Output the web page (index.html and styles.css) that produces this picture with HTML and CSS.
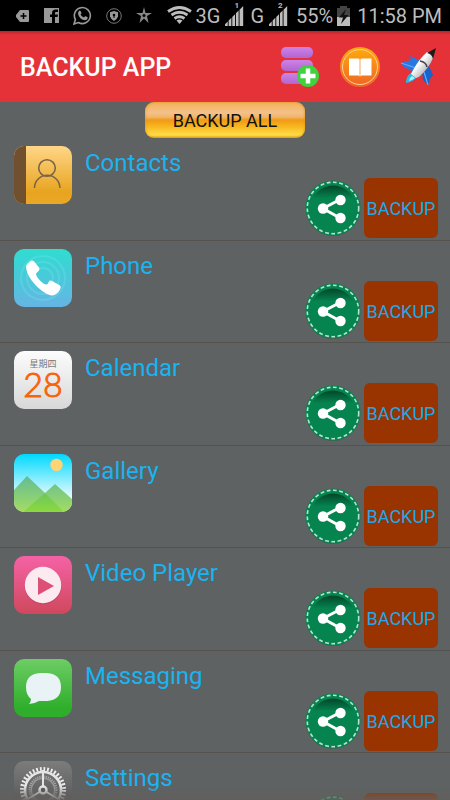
FILE: index.html
```html
<!DOCTYPE html>
<html lang="en">
<head>
<meta charset="utf-8">
<meta name="viewport" content="width=device-width, initial-scale=1">
<title>Backup App</title>
<link rel="stylesheet" href="styles.css">
</head>
<body>
<svg class="defs" aria-hidden="true">
  <defs>
    <linearGradient id="shareShade" x1="0" y1="0" x2="0" y2="1">
      <stop offset="0" stop-color="#00462a"/><stop offset=".1" stop-color="#045c36"/><stop offset=".28" stop-color="#058450"/><stop offset="1" stop-color="#058450"/>
    </linearGradient>
    <symbol id="share" viewBox="0 0 56 56">
      <circle cx="28" cy="29" r="27" fill="#3f5449" opacity=".5"/>
      <circle cx="28" cy="28" r="27.500" fill="#058450"/>
      <circle cx="28" cy="28.500" r="23" fill="url(#shareShade)"/>
      <circle cx="28" cy="28" r="25.700" fill="none" stroke="#b4e5cd" stroke-width="1.600" stroke-dasharray="3.800 2.530"/>
      <path d="M35 19.500 18 28.500l17 9.500" fill="none" stroke="#fff" stroke-width="3"/>
      <circle cx="35.500" cy="20" r="5.200" fill="#fff"/><circle cx="18" cy="28.500" r="5.200" fill="#fff"/><circle cx="35.500" cy="38" r="5.200" fill="#fff"/>
    </symbol>
    <symbol id="signal" viewBox="0 0 22 22">
      <path d="M0 22v-2l3-3v5zM4 22v-6l3-3v9zM8 22V12l3-3v13zM12 22V8l3-3v17zM16 22V4l4-4v22z" fill="#bebebe"/>
    </symbol>
  </defs>
</svg>

<div class="status">
  <div class="status-group">
    <svg width="14" height="12" viewBox="0 0 14 12"><path d="M4 0h8q1 0 1 1v10q0 1-1 1H4L0 7V5z" fill="#999"/><path d="M7.500 3v6M4.500 6h6" stroke="#000" stroke-width="1.500"/></svg>
    <svg width="15" height="15" viewBox="0 0 15 15"><path d="M0 0h15v15h-4V9h2.500l.5-2.500h-3V5q0-1 1-1h2V1.500h-2.500Q8 1.500 8 5v1.500H6V9h2v6H0z" fill="#999"/></svg>
    <svg width="19" height="19" viewBox="0 0 19 19"><path d="M1 18l1.400-4.500a8 8 0 1 1 3 3z" fill="none" stroke="#999" stroke-width="1.600"/><path d="M6 5q1-1 1.500 0l1 2q0 .7-1 1.500 1 2 3.500 3 1-1.500 1.700-1.200l2 1q0 3-3 3Q6 13 5 7.500 5 6 6 5z" fill="#999"/></svg>
    <svg width="16" height="16" viewBox="0 0 16 16"><circle cx="8" cy="8" r="7.300" fill="none" stroke="#777" stroke-width="1"/><path d="M8 3l4 1.300v4Q11.500 11 8 13 4.500 11 4 8.300v-4z" fill="#999"/><circle cx="8" cy="7" r="1.300"/><path d="M8 7v3" stroke="#000"/></svg>
    <svg width="16" height="17" viewBox="0 0 16 17"><path d="M8 0l1.500 6H16l-5 3 1.500 7L8 11.500 3.500 16 5 9 0 6h6.500z" fill="#888"/><circle cx="8" cy="8.500" r="1.500"/></svg>
  </div>
  <div class="status-group status-right">
    <svg width="25" height="19" viewBox="0 0 25 19"><g fill="none" stroke="#bdbdbd" stroke-width="2.800"><path d="M1 5.500Q12.500-2.500 24 5.500M4.500 9Q12.500 3.500 20.500 9M7.500 12.500Q12.500 9 17.500 12.500"/></g><path d="M9.500 14.500q3-2 6 0l-3 3.500z" fill="#bdbdbd"/></svg>
    <span>3G</span>
    <span class="sim"><svg width="22" height="20"><use href="#signal"/></svg><small>1</small></span>
    <span>G</span>
    <span class="sim"><svg width="22" height="20"><use href="#signal"/></svg><small>2</small></span>
    <span class="percent">55%</span>
    <svg width="13" height="20" viewBox="0 0 13 20"><path d="M3 0h7v2h3v18H0V2h3z" fill="#444"/><path d="M0 11h13v9H0z" fill="#bdbdbd"/><path d="M9 3 2 11.500h4L4 18l7.500-9H7z" fill="#111"/></svg>
    <time class="time">11:58 PM</time>
  </div>
</div>

<header class="bar">
  <h1>BACKUP APP</h1>
  <nav class="actions">
    <button type="button" aria-label="Add storage">
      <svg width="40" height="42" viewBox="0 0 40 42">
        <defs><linearGradient id="disk" x1="0" y1="0" x2="0" y2="1"><stop stop-color="#ce83e6"/><stop offset="1" stop-color="#b165d0"/></linearGradient></defs>
        <g fill="url(#disk)"><rect x="1" y="1" width="32" height="11" rx="5"/><rect x="1" y="14" width="32" height="11" rx="5"/><rect x="1" y="27" width="32" height="11" rx="5"/></g>
        <circle cx="28" cy="30" r="11" fill="#3ed23c"/><path d="M28 22.500v15M20.500 30h15" stroke="#fff" stroke-width="4.500"/>
      </svg>
    </button>
    <button type="button" aria-label="Guide">
      <svg width="40" height="42" viewBox="0 0 40 42">
        <defs><linearGradient id="book" x1="0" y1="0" x2="0" y2="1"><stop stop-color="#ffab0b"/><stop offset="1" stop-color="#f06326"/></linearGradient></defs>
        <circle cx="20" cy="21" r="20" fill="url(#book)"/><circle cx="20" cy="21" r="17.500" fill="none" stroke="#ffcf9c" stroke-width="1"/>
        <path d="M9 12.500h9.500q1.500 0 1.500 1.500 0-1.500 1.500-1.500H31.500v17H22q-1 0-2 1-1-1-2-1H9z" fill="#fff"/><path d="M20 13v17" stroke="#f6a75a" stroke-width="1"/>
      </svg>
    </button>
    <button type="button" aria-label="Launch">
      <svg width="40" height="42" viewBox="0 0 40 42">
        <defs><linearGradient id="hull" x1="0" y1="0" x2="1" y2="1"><stop stop-color="#8b8b8b"/><stop offset=".4" stop-color="#fff"/><stop offset="1" stop-color="#777"/></linearGradient></defs>
        <path d="M11 27q-5 3-5 10 7-1 12-7z" fill="#23bde8"/><path d="M12 30q-3 2-3 5 4-1 6-3z" fill="#9ff7ff"/>
        <path d="M21 15 10 10l1 4-10 3 3 4 10 5z" fill="#2878e3"/><path d="M22 25l1 9 5 5 2-6 3-4-4-9z" fill="#1763cb"/><path d="M1 17l15 5M28 39l-4-13" stroke="#64abf8" stroke-width="1.200"/>
        <path d="M12 26Q18 14 27 6q6 1 6 6-4 10-14 19l-3 1-5-4z" fill="url(#hull)"/>
        <path d="M36 2 27 7q5 1 6 6z" fill="#1d1b1b"/><path d="M20 15q6 1 7 6" fill="none" stroke="#444" stroke-width="1.600"/>
      </svg>
    </button>
  </nav>
</header>

<main class="content">
  <button type="button" class="backup-all">BACKUP ALL</button>
  <ul class="apps">
    <li class="app">
      <svg class="icon" viewBox="0 0 58 58" aria-hidden="true">
        <defs><linearGradient id="g1" x1="0" y1="0" x2="0" y2="1"><stop stop-color="#ffd688"/><stop offset=".8" stop-color="#e8a41f"/><stop offset="1" stop-color="#e9a826"/></linearGradient></defs>
        <path fill="url(#g1)" d="M0 0h58v58H0z"/><path fill="#70502f" d="M0 0h12v58H0z"/>
        <g fill="none" stroke="#7b6547" stroke-width="1.600"><circle cx="33" cy="22" r="8.300"/><path d="M20.500 42a12.700 12.700 0 0 1 25.400 0"/></g>
      </svg>
      <h2>Contacts</h2>
      <div class="row-actions"><button type="button" class="share" aria-label="Share Contacts"><svg viewBox="0 0 56 56"><use href="#share"/></svg></button><button type="button" class="backup">BACKUP</button></div>
    </li>
    <li class="app">
      <svg class="icon" viewBox="0 0 58 58" aria-hidden="true">
        <defs><linearGradient id="g2" x1="0" y1="0" x2="0" y2="1"><stop stop-color="#2fddd0"/><stop offset="1" stop-color="#65b5e4"/></linearGradient></defs>
        <path fill="url(#g2)" d="M0 0h58v58H0z"/>
        <g fill="none" stroke="#8ef0f2" opacity=".2" stroke-width="2"><circle cx="29" cy="29" r="22"/><circle cx="29" cy="29" r="16"/><circle cx="29" cy="29" r="10"/></g>
        <path fill="#fff" d="M12 17Q15 12 18 11.500q2 0 3 2l4 5q1 2 0 3l-3 3q0 3 4 7 4 4 6 4 2 0 3-3 1-2 4 0l7 4q1.500 1.500 0 4-3 6-9 6Q29 45 18 32 12 24 12 17z"/>
      </svg>
      <h2>Phone</h2>
      <div class="row-actions"><button type="button" class="share" aria-label="Share Phone"><svg viewBox="0 0 56 56"><use href="#share"/></svg></button><button type="button" class="backup">BACKUP</button></div>
    </li>
    <li class="app">
      <svg class="icon" viewBox="0 0 58 58" aria-hidden="true">
        <defs><linearGradient id="g3" x1="0" y1="0" x2="0" y2="1"><stop stop-color="#fcfcfc"/><stop offset="1" stop-color="#d8d8d8"/></linearGradient></defs>
        <path fill="url(#g3)" d="M0 0h58v58H0z"/>
        <text class="weekday" x="29" y="16" text-anchor="middle">星期四</text>
        <text class="day" x="29" y="46" text-anchor="middle">28</text>
      </svg>
      <h2>Calendar</h2>
      <div class="row-actions"><button type="button" class="share" aria-label="Share Calendar"><svg viewBox="0 0 56 56"><use href="#share"/></svg></button><button type="button" class="backup">BACKUP</button></div>
    </li>
    <li class="app">
      <svg class="icon" viewBox="0 0 58 58" aria-hidden="true">
        <defs><linearGradient id="g4" x1="0" y1="0" x2="0" y2="1"><stop stop-color="#00d9ff"/><stop offset=".75" stop-color="#e9fbff"/></linearGradient>
        <linearGradient id="g4a" gradientUnits="userSpaceOnUse" x1="0" y1="22" x2="0" y2="58"><stop stop-color="#62bd93"/><stop offset="1" stop-color="#a5dc62"/></linearGradient>
        <linearGradient id="g4b" gradientUnits="userSpaceOnUse" x1="0" y1="38" x2="0" y2="58"><stop stop-color="#6bc55e"/><stop offset="1" stop-color="#8cd93e"/></linearGradient></defs>
        <path fill="url(#g4)" d="M0 0h58v58H0z"/><circle cx="42.500" cy="11" r="6.200" fill="#ffd475"/>
        <path fill="url(#g4a)" d="M0 36 13 22l18 17 10-9 17 15v13H0z"/><path fill="url(#g4b)" d="m9 58 22-19 19 19z"/>
      </svg>
      <h2>Gallery</h2>
      <div class="row-actions"><button type="button" class="share" aria-label="Share Gallery"><svg viewBox="0 0 56 56"><use href="#share"/></svg></button><button type="button" class="backup">BACKUP</button></div>
    </li>
    <li class="app">
      <svg class="icon" viewBox="0 0 58 58" aria-hidden="true">
        <defs><linearGradient id="g5" x1="0" y1="0" x2="0" y2="1"><stop stop-color="#f562a5"/><stop offset="1" stop-color="#cf485d"/></linearGradient></defs>
        <path fill="url(#g5)" d="M0 0h58v58H0z"/><circle cx="29" cy="30" r="18.500" fill="#b53a59" opacity=".4"/><circle cx="29" cy="29" r="18.200" fill="#fbeaf0"/><path fill="#dc5078" d="m24 21 16 9-16 9z"/>
      </svg>
      <h2>Video Player</h2>
      <div class="row-actions"><button type="button" class="share" aria-label="Share Video Player"><svg viewBox="0 0 56 56"><use href="#share"/></svg></button><button type="button" class="backup">BACKUP</button></div>
    </li>
    <li class="app">
      <svg class="icon" viewBox="0 0 58 58" aria-hidden="true">
        <defs><linearGradient id="g6" x1="0" y1="0" x2="0" y2="1"><stop stop-color="#6dcd65"/><stop offset=".85" stop-color="#2fae2b"/></linearGradient></defs>
        <path fill="url(#g6)" d="M0 0h58v58H0z"/><path fill="#e9f3f6" d="M26 14h7q14 1 14 14 0 13-14 14h-8q-5 3-10 3 2-2 2-5-5-4-5-12 0-13 14-14z"/>
      </svg>
      <h2>Messaging</h2>
      <div class="row-actions"><button type="button" class="share" aria-label="Share Messaging"><svg viewBox="0 0 56 56"><use href="#share"/></svg></button><button type="button" class="backup">BACKUP</button></div>
    </li>
    <li class="app">
      <svg class="icon" viewBox="0 0 58 58" aria-hidden="true">
        <defs><linearGradient id="g7" x1="0" y1="0" x2="0" y2="1"><stop stop-color="#7c7c7c"/><stop offset="1" stop-color="#4c4c4c"/></linearGradient></defs>
        <path fill="url(#g7)" d="M0 0h58v58H0z"/>
        <g fill="none"><circle cx="29" cy="29" r="21" stroke="#eee" stroke-width="4" stroke-dasharray="1.800 1.860"/><circle cx="29" cy="29" r="18" stroke="#e5e5e5" stroke-width="2.600"/><circle cx="29" cy="29" r="13.500" stroke="#a8a8a8" stroke-width="2" stroke-dasharray="1.200 1"/><circle cx="29" cy="29" r="11.700" stroke="#999" stroke-width="1.600"/><path d="M29 9v20L12 39m17-10 17 10" stroke="#e5e5e5" stroke-width="2"/><circle cx="29" cy="29" r="3.500" fill="#555" stroke="#e8e8e8" stroke-width="2.500"/></g>
      </svg>
      <h2>Settings</h2>
      <div class="row-actions"><button type="button" class="share" aria-label="Share Settings"><svg viewBox="0 0 56 56"><use href="#share"/></svg></button><button type="button" class="backup">BACKUP</button></div>
    </li>
  </ul>
</main>
</body>
</html>
```
FILE: styles.css
```css
* {
  box-sizing: border-box;
}

body {
  margin: 0;
  height: 100vh;
  display: flex;
  flex-direction: column;
  overflow: hidden;
  background: #5e6262;
  font-family: Roboto, "Noto Sans", sans-serif;
}

button {
  border: 0;
  padding: 0;
  background: none;
  font: inherit;
  cursor: pointer;
}

svg {
  display: block;
  flex: none;
}

.defs {
  position: absolute;
  width: 0;
  height: 0;
}

.status {
  display: flex;
  justify-content: space-between;
  flex: none;
  height: 31px;
  padding: 0 8px 0 16px;
  background: #000;
  color: #bdbdbd;
  font-size: 20px;
  line-height: 32px;
}

.status-group {
  display: flex;
  align-items: center;
  gap: 14px;
}

.status-right {
  gap: 4px;
}

.sim {
  position: relative;
}

.sim small {
  position: absolute;
  top: -4px;
  left: 10px;
  font-size: 8px;
  font-weight: 700;
  line-height: 8px;
}

.percent {
  margin-left: 2px;
}

.time {
  margin-left: 3px;
}

.bar {
  display: flex;
  align-items: center;
  justify-content: space-between;
  flex: none;
  height: 71px;
  padding: 0 10px 0 20px;
  background: linear-gradient(#b3272c, #e53238 4px);
}

.bar h1 {
  margin: 0;
  padding-top: 2px;
  color: #fff;
  font-size: 25px;
  font-weight: 500;
}

.actions {
  display: flex;
  gap: 20px;
}

.content {
  position: relative;
  flex: 1;
  min-height: 0;
  overflow: hidden;
}

.content::after {
  content: "";
  position: absolute;
  inset: auto 0 0;
  height: 14px;
  background: linear-gradient(rgb(98 95 93 / 0), rgb(98 95 93 / .9));
}

.backup-all {
  display: block;
  width: 160px;
  height: 36px;
  margin: 0 auto;
  border-radius: 9px;
  background: linear-gradient(#f3b25c, #f3c188 30%, #f2b46a 42%, #f09a14 50%, #f8b922 70%, #ffdf4a 92%, #e5a421);
  box-shadow: inset 0 0 3px #e58b08;
  color: #111;
  font-size: 18px;
}

.apps {
  margin: 0;
  padding: 0;
  list-style: none;
}

.app {
  display: grid;
  grid-template-columns: 58px 1fr auto;
  column-gap: 13px;
  height: 103px;
  padding: 8px 12px 0 14px;
  border-bottom: 1px solid #56534f;
}

.app:nth-child(even) {
  height: 102px;
}

.icon {
  width: 58px;
  height: 58px;
  border-radius: 10px;
}

.app h2 {
  margin: 3px 0 0;
  color: #1bb3f1;
  font-size: 24px;
  font-weight: 400;
  line-height: 28px;
}

.row-actions {
  display: flex;
  align-items: center;
  gap: 3px;
  height: 60px;
  margin-top: 32px;
}

.share {
  width: 56px;
  height: 56px;
}

.backup {
  width: 74px;
  height: 60px;
  border-radius: 6px;
  background: #993300;
  color: #1ba9ec;
  font-size: 18px;
}

.weekday {
  fill: #777;
  font-family: "Noto Sans CJK SC", sans-serif;
  font-size: 9px;
}

.day {
  fill: #f8640b;
  stroke: #f8640b;
  stroke-width: 1px;
  font-family: Lato, Roboto, sans-serif;
  font-size: 34px;
  font-weight: 300;
}
```
